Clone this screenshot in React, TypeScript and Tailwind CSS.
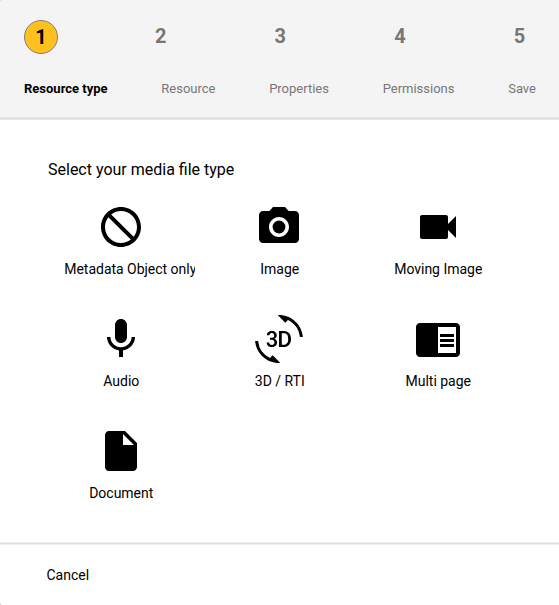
import type { ComponentType } from "react";
import {
  MdNotInterested,
  MdPhotoCamera,
  MdVideocam,
  MdMic,
  Md3dRotation,
  MdChromeReaderMode,
  MdInsertDriveFile,
} from "react-icons/md";

const steps = ["Resource type", "Resource", "Properties", "Permissions", "Save"];

const types: { label: string; Icon: ComponentType<{ size?: number }> }[] = [
  { label: "Metadata Object only", Icon: MdNotInterested },
  { label: "Image", Icon: MdPhotoCamera },
  { label: "Moving Image", Icon: MdVideocam },
  { label: "Audio", Icon: MdMic },
  { label: "3D / RTI", Icon: Md3dRotation },
  { label: "Multi page", Icon: MdChromeReaderMode },
  { label: "Document", Icon: MdInsertDriveFile },
];

function StepHeader() {
  return (
    <header className="h-[117px] bg-[#f4f4f4] pt-5 pr-[22.5px] pl-6">
      <div className="flex justify-between">
        {steps.map((step, i) => (
          <div
            key={step}
            className={
              i === 0
                ? "flex size-[34px] items-center justify-center rounded-full border border-[#808080] bg-[#ffc020] text-xl font-bold text-black"
                : "flex h-8 w-[34px] items-center justify-center text-xl font-bold text-[#777777]"
            }
          >
            {i + 1}
          </div>
        ))}
      </div>
      <div className="mt-[25px] mr-[0.5px] flex justify-between text-[13px] leading-5 whitespace-nowrap">
        {steps.map((step, i) => (
          <span key={step} className={i === 0 ? "font-bold text-black" : "text-[#777777]"}>
            {step}
          </span>
        ))}
      </div>
    </header>
  );
}

export default function App() {
  return (
    <div className="h-[605px] w-[559px] bg-[#b0b0b0]">
      <div className="flex h-full w-full flex-col overflow-hidden rounded-l-[2px] bg-white font-['Roboto',sans-serif] text-black">
        <StepHeader />
        <div className="h-[3px] border-y border-[#e8e8e8] bg-[#dcdcdc]" />
        <main className="h-[422px] pt-10 pr-[42px] pl-[41.5px]">
          <h1 className="ml-[6.5px] text-base leading-5">Select your media file type</h1>
          <div className="mt-[23px] grid grid-cols-3">
            {types.map(({ label, Icon }) => (
              <button key={label} className="flex h-28 flex-col items-center">
                <Icon size={48} />
                <span className="mt-2 ml-px w-[114px] text-center text-[14px] leading-5 whitespace-nowrap">
                  <span className="inline-block max-w-[131px] overflow-hidden tracking-[-0.02px]">{label}</span>
                </span>
              </button>
            ))}
          </div>
        </main>
        <div className="h-[3px] border-y border-[#eeeeee] bg-[#e0e0e0]" />
        <footer className="pt-5 pl-[46.5px]">
          <button className="block text-[14px] leading-5">Cancel</button>
        </footer>
      </div>
    </div>
  );
}
